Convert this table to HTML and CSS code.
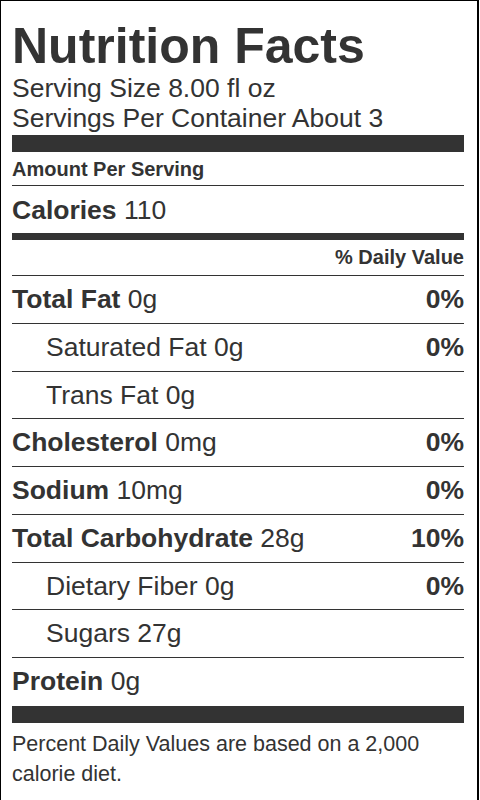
FILE: index.html
```html
<!DOCTYPE html>
<html lang="en">
<head>
<meta charset="utf-8">
<title>Nutrition Facts</title>
<link rel="stylesheet" href="styles.css">
</head>
<body>
<section class="label">
  <h1 class="title">Nutrition Facts</h1>
  <div class="serving">
    <div>Serving Size 8.00 fl oz</div>
    <div>Servings Per Container About 3</div>
  </div>
  <div class="bar bar-thick"></div>
  <div class="amount">Amount Per Serving</div>
  <div class="calories"><b>Calories</b> 110</div>
  <div class="bar bar-medium"></div>
  <div class="dv-head">% Daily Value</div>
  <div class="row"><span><b>Total Fat</b> 0g</span><b>0%</b></div>
  <div class="row sub"><span>Saturated Fat 0g</span><b>0%</b></div>
  <div class="row sub"><span>Trans Fat 0g</span></div>
  <div class="row"><span><b>Cholesterol</b> 0mg</span><b>0%</b></div>
  <div class="row"><span><b>Sodium</b> 10mg</span><b>0%</b></div>
  <div class="row"><span><b>Total Carbohydrate</b> 28g</span><b>10%</b></div>
  <div class="row sub"><span>Dietary Fiber 0g</span><b>0%</b></div>
  <div class="row sub"><span>Sugars 27g</span></div>
  <div class="row last"><span><b>Protein</b> 0g</span></div>
  <div class="bar bar-thick bar-bottom"></div>
  <p class="footnote">Percent Daily Values are based on a 2,000 calorie diet.</p>
</section>
</body>
</html>
```
FILE: styles.css
```css
html, body {
  margin: 0;
  padding: 0;
  background: #fff;
}
body {
  font-family: "Liberation Sans", Arial, Helvetica, sans-serif;
  color: #333;
}
b {
  font-weight: 700;
}
.label {
  box-sizing: border-box;
  width: 479px;
  min-height: 820px;
  border: 1px solid #000;
  border-right-width: 2px;
  padding: 20px 13px 0 11px;
}
.title {
  margin: 0;
  font-size: 50px;
  font-weight: 700;
  line-height: 50px;
}
.serving {
  margin-top: 2px;
  font-size: 26.5px;
  line-height: 30px;
}
.bar {
  background: #333;
}
.bar-thick {
  height: 17px;
  margin-top: 2px;
}
.bar-medium {
  height: 7px;
}
.bar-bottom {
  margin-top: 1px;
}
.amount {
  padding: 5px 0 4px;
  font-size: 20px;
  font-weight: 700;
  line-height: 24px;
  border-bottom: 1px solid #333;
}
.calories {
  padding: 9px 0 8px;
  font-size: 26.5px;
  line-height: 30px;
}
.dv-head {
  padding: 5px 0 6px;
  font-size: 20px;
  font-weight: 700;
  line-height: 24px;
  text-align: right;
  border-bottom: 1px solid #333;
}
.row {
  display: flex;
  justify-content: space-between;
  padding: 8px 0 8.75px;
  font-size: 26.5px;
  line-height: 30px;
  border-bottom: 1px solid #333;
}
.row.last {
  border-bottom: 0;
}
.sub {
  padding-left: 34px;
}
.footnote {
  margin: 6.5px 0 0;
  font-size: 21.5px;
  line-height: 30px;
}
```
